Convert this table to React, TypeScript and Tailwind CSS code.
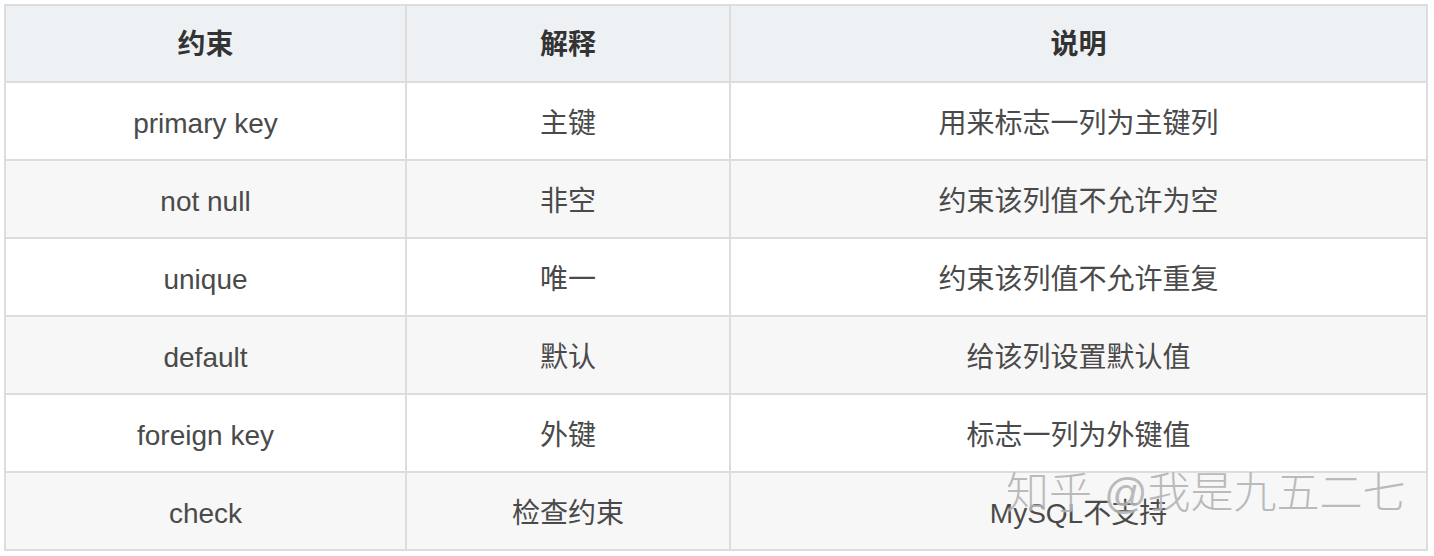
import React from "react";

const rows: [string, string, string][] = [
  ["primary key", "主键", "用来标志一列为主键列"],
  ["not null", "非空", "约束该列值不允许为空"],
  ["unique", "唯一", "约束该列值不允许重复"],
  ["default", "默认", "给该列设置默认值"],
  ["foreign key", "外键", "标志一列为外键值"],
  ["check", "检查约束", "MySQL不支持"],
];

const font = { fontFamily: '"Liberation Sans", "Noto Sans CJK SC", sans-serif' };

export default function App() {
  return (
    <div className="relative w-[1434px] h-[556px] bg-white overflow-hidden" style={font}>
      <div className="ml-[4px] mt-[4px] w-[1424px] border-2 border-[#dddddd]">
        <div className="grid grid-cols-[401px_324px_695px] h-[77px] border-b-2 border-[#dddddd] bg-[#eef1f4] text-[28px] font-bold text-[#333333]">
          <div className="flex items-center justify-center pt-[2px] border-r-2 border-[#dddddd]">约束</div>
          <div className="flex items-center justify-center pt-[2px] border-r-2 border-[#dddddd]">解释</div>
          <div className="flex items-center justify-center pt-[2px]">说明</div>
        </div>
        {rows.map((r, i) => (
          <div
            key={i}
            className={`grid grid-cols-[401px_324px_695px] text-[28px] text-[#4a4a4a] ${
              i % 2 === 1 ? "bg-[#f7f7f7]" : "bg-white"
            } ${i < rows.length - 1 ? "h-[78px] border-b-2 border-[#dddddd]" : "h-[76px]"}`}
          >
            <div className="flex items-center justify-center pt-[5px] border-r-2 border-[#dddddd]">{r[0]}</div>
            <div className="flex items-center justify-center pt-[5px] border-r-2 border-[#dddddd]">{r[1]}</div>
            <div className="flex items-center justify-center pt-[5px]">{r[2]}</div>
          </div>
        ))}
      </div>
      <div
        className="absolute left-[1006px] top-[472px] text-[43px] font-light leading-none text-[#b4b4b4] opacity-90 whitespace-nowrap"
        style={{ textShadow: "0 0 2px rgba(255,255,255,0.9)" }}
      >
        知乎 @我是九五二七
      </div>
    </div>
  );
}
